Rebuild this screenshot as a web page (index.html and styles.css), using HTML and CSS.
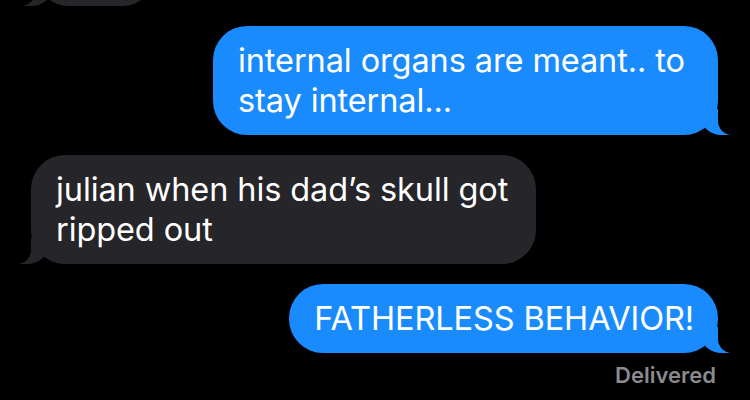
FILE: index.html
```html
<!DOCTYPE html>
<html lang="en">
<head>
    <meta charset="UTF-8">
    <meta name="viewport" content="width=device-width, initial-scale=1.0">
    <title>Messages</title>
    <link rel="stylesheet" href="styles.css">
</head>
<body>
    <div class="thread">
        <div class="bubble received cut-off"></div>
        <div class="bubble sent">internal organs are meant.. to stay internal...</div>
        <div class="bubble received">julian when his dad’s skull got ripped out</div>
        <div class="bubble sent">FATHERLESS BEHAVIOR!</div>
        <div class="status">Delivered</div>
    </div>
</body>
</html>
```

FILE: styles.css
```css
body {
    margin: 0;
    background-color: #000;
    font-family: 'Inter', 'Noto Sans', sans-serif;
    height: 100vh;
    overflow: hidden;
}

.thread {
    display: flex;
    flex-direction: column;
    gap: 20px;
    padding: 0 32px 0 31px;
}

.bubble {
    position: relative;
    max-width: 456px;
    padding: 14.5px 24px 14.5px 25px;
    border-radius: 34px;
    font-size: 32.5px;
    line-height: 40px;
    letter-spacing: -0.1px;
    color: #fff;
}

.sent {
    align-self: flex-end;
    background-color: #1a8bfd;
}

.received {
    align-self: flex-start;
    background-color: #262529;
}

/* tails */
.bubble::before,
.bubble::after {
    content: "";
    position: absolute;
    bottom: 0;
    height: 26px;
}

.sent::before {
    right: -12px;
    width: 30px;
    background-color: #1a8bfd;
    border-bottom-left-radius: 22px 20px;
}

.sent::after {
    right: -26px;
    width: 26px;
    background-color: #000;
    border-bottom-left-radius: 14px;
}

.received::before {
    left: -12px;
    width: 30px;
    background-color: #262529;
    border-bottom-right-radius: 22px 20px;
}

.received::after {
    left: -26px;
    width: 26px;
    background-color: #000;
    border-bottom-right-radius: 14px;
}

.cut-off {
    width: 72px;
    height: 40px;
    margin-top: -63px;
    margin-left: 4px;
}

.status {
    align-self: flex-end;
    margin-top: -11px;
    margin-right: 2px;
    font-size: 22px;
    font-weight: 600;
    color: #8a8a8e;
}
```
